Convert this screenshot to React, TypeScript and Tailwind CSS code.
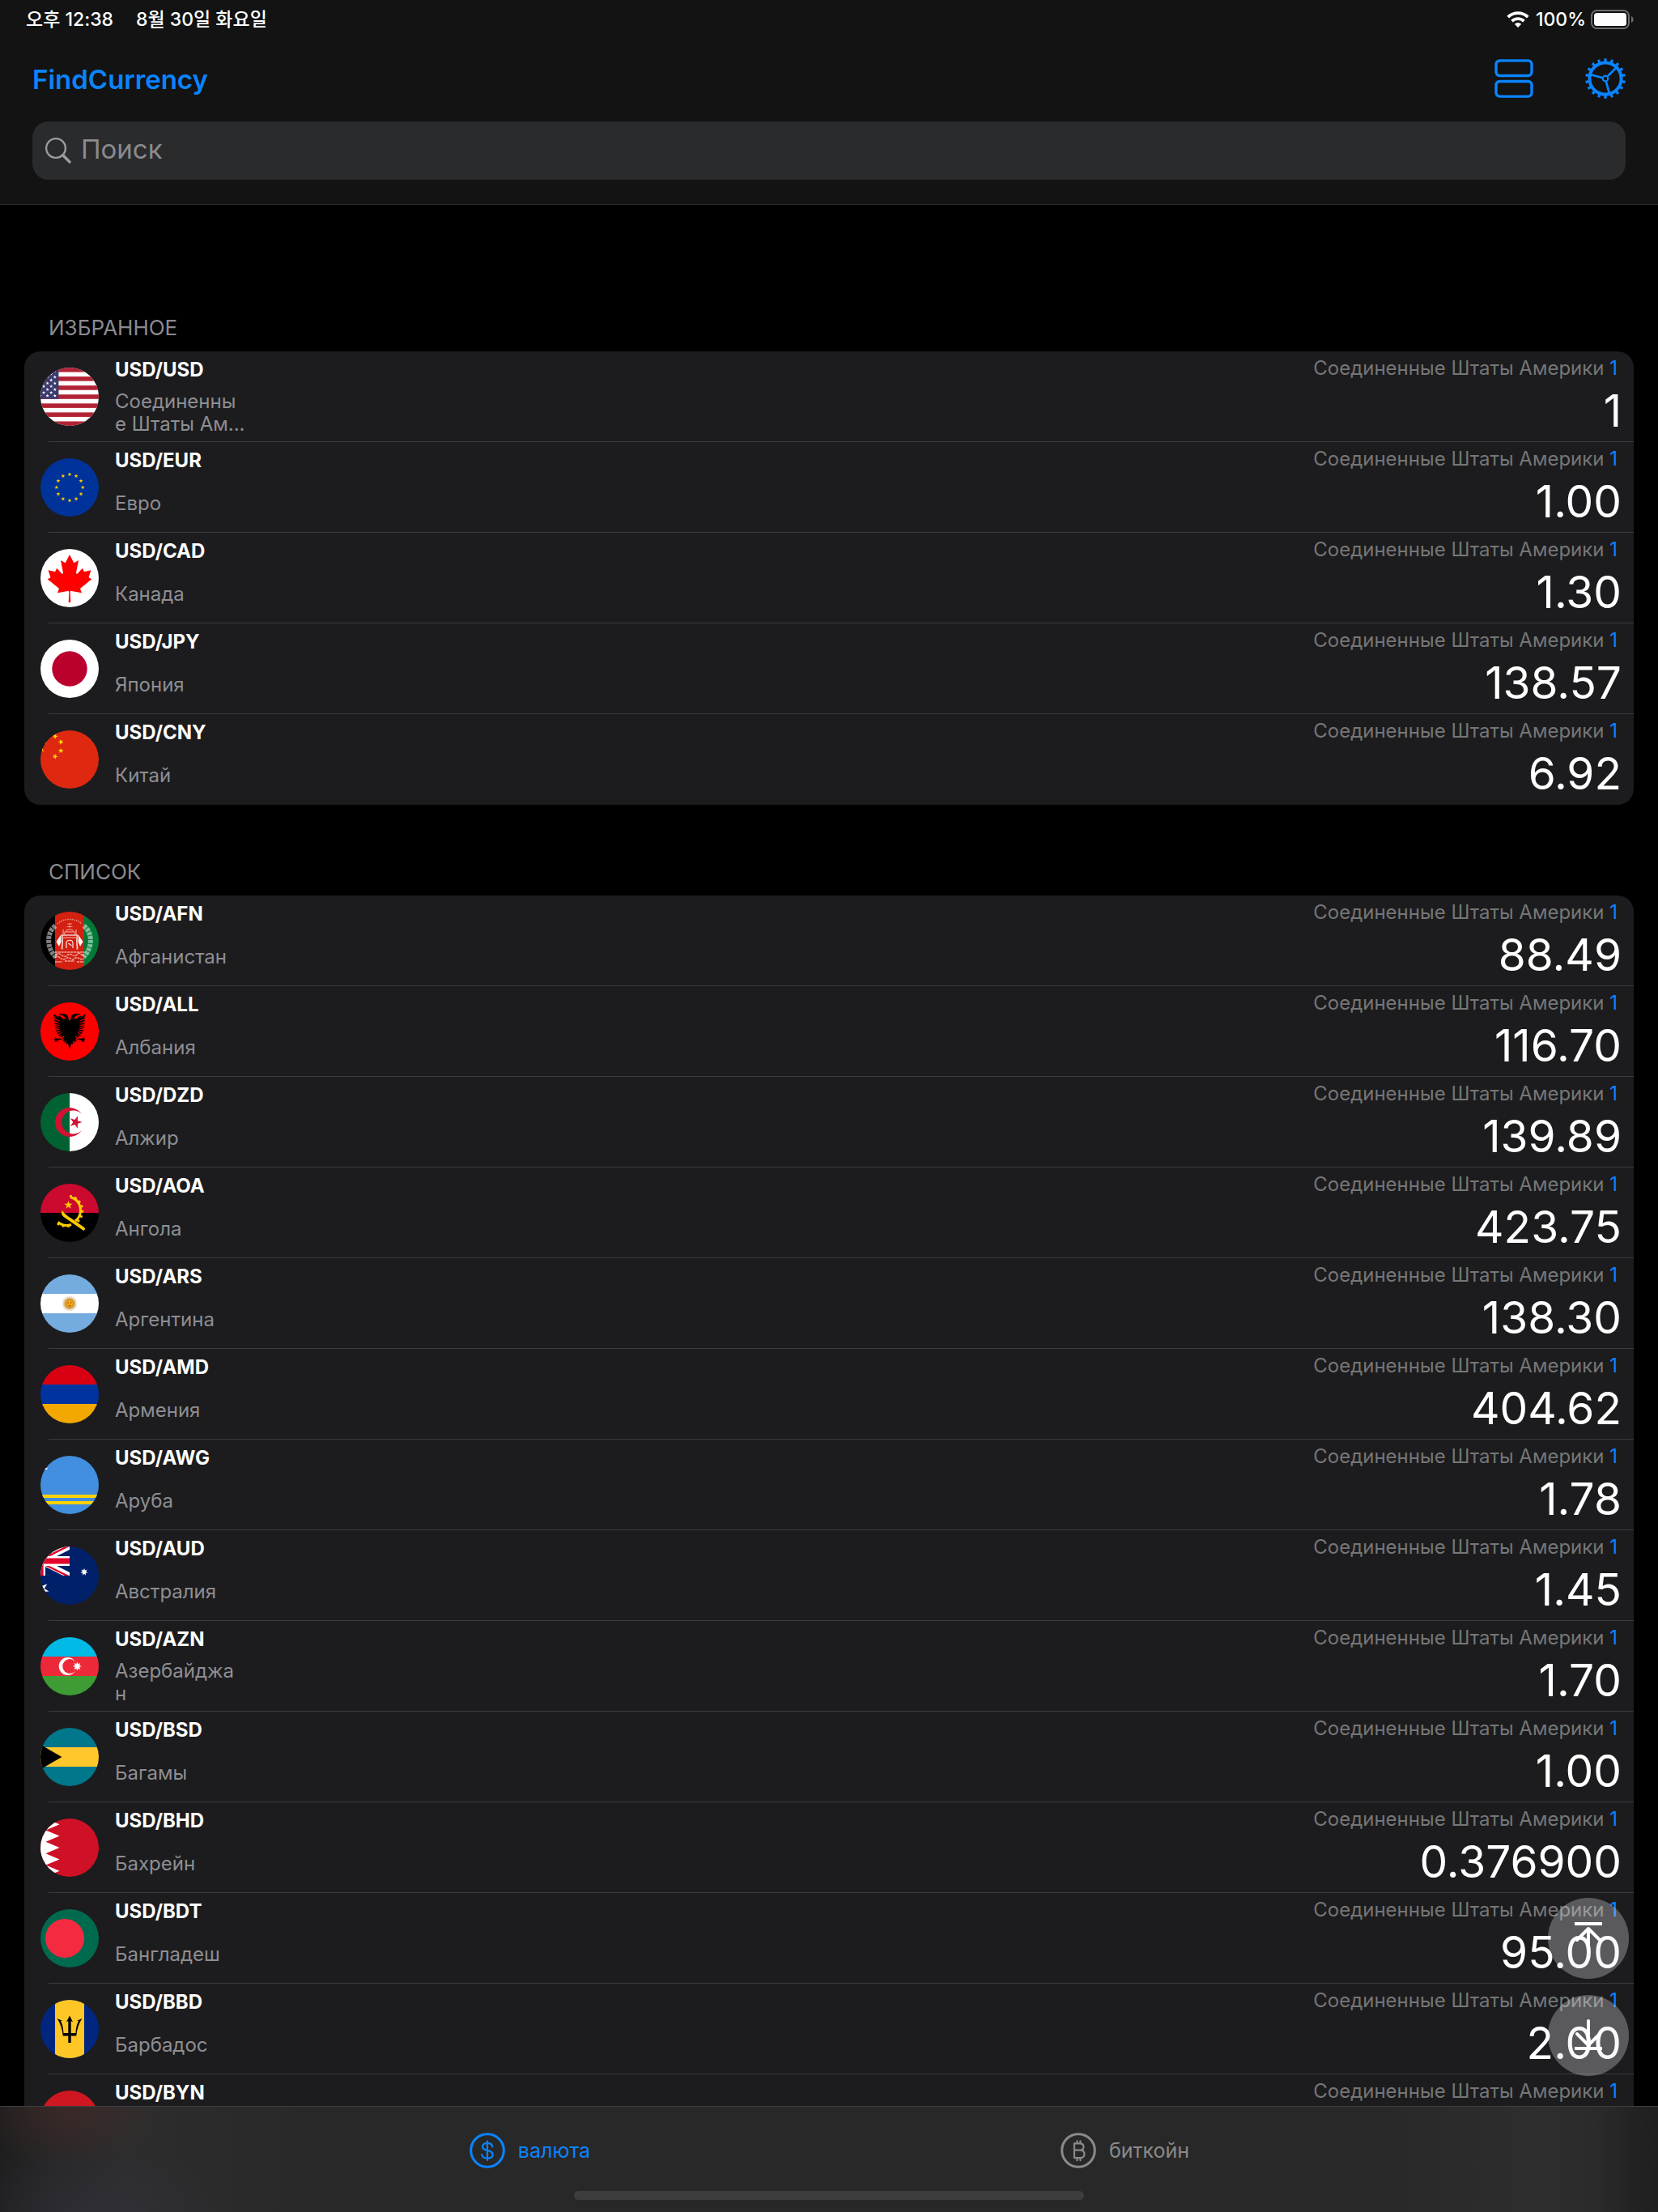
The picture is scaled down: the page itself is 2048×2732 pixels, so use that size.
import React from "react";

function star(cx: number, cy: number, outer: number, inner: number, points = 5, rotate = 0) {
  const out: string[] = [];
  for (let i = 0; i < points * 2; i++) {
    const r = i % 2 === 0 ? outer : inner;
    const a = ((i * 180) / points - 90 + rotate) * (Math.PI / 180);
    out.push(`${(cx + r * Math.cos(a)).toFixed(2)},${(cy + r * Math.sin(a)).toFixed(2)}`);
  }
  return out.join(" ");
}

function Tricolor({ a, b, c }: { a: string; b: string; c: string }) {
  return (
    <>
      <rect width="72" height="24" fill={a} />
      <rect y="24" width="72" height="24" fill={b} />
      <rect y="48" width="72" height="24" fill={c} />
    </>
  );
}

function UsFlag() {
  const stars: React.ReactNode[] = [];
  for (let col = 0; col < 5; col++) {
    for (let row = 0; row < 5; row++) {
      const x = 17.8 - col * 4.6;
      const y = (col % 2 === 0 ? 4 : 7.8) + row * 7.7;
      if (y < 37) stars.push(<polygon key={`${col}-${row}`} points={star(x, y, 2.2, 0.9)} fill="#fff" />);
    }
  }
  return (
    <>
      <rect width="72" height="72" fill="#fff" />
      {[0, 1, 2, 3, 4, 5, 6].map((i) => (
        <rect key={i} y={(i * 2 * 72) / 13} width="72" height={72 / 13} fill="#b22234" />
      ))}
      <rect width="22.4" height={(72 * 7) / 13} fill="#3c3b6e" />
      {stars}
    </>
  );
}

function EuFlag() {
  return (
    <>
      <rect width="72" height="72" fill="#003399" />
      {Array.from({ length: 12 }, (_, i) => {
        const a = (i * Math.PI) / 6;
        return <polygon key={i} points={star(36 + 16.2 * Math.sin(a), 36 - 16.2 * Math.cos(a), 2.6, 1.1)} fill="#ffcc00" />;
      })}
    </>
  );
}

function CaFlag() {
  return (
    <>
      <rect width="72" height="72" fill="#fff" />
      <path
        transform="translate(-34.56 1) scale(.0147)"
        fill="#f00"
        d="M4890 4430l-45-863a95 95 0 0 1 111-98l859 151-116-320a65 65 0 0 1 20-73l941-762-212-99a65 65 0 0 1-34-79l186-572-542 115a65 65 0 0 1-73-38l-105-247-423 454a65 65 0 0 1-111-57l204-1052-327 189a65 65 0 0 1-91-27l-332-652-332 652a65 65 0 0 1-91 27l-327-189 204 1052a65 65 0 0 1-111 57l-423-454-105 247a65 65 0 0 1-73 38l-542-115 186 572a65 65 0 0 1-34 79l-212 99 941 762a65 65 0 0 1 20 73l-116 320 859-151a95 95 0 0 1 111 98l-45 863z"
      />
    </>
  );
}

function CnFlag() {
  return (
    <>
      <rect width="72" height="72" fill="#de2910" />
      <polygon points={star(-2.3, 18, 10.8, 4.1)} fill="#ffde00" />
      <polygon points={star(18, 7.3, 3.5, 1.4, 5, 23)} fill="#ffde00" />
      <polygon points={star(25.2, 14.4, 3.5, 1.4, 5, 46)} fill="#ffde00" />
      <polygon points={star(25.2, 25.2, 3.5, 1.4, 5, 0)} fill="#ffde00" />
      <polygon points={star(18, 32.3, 3.5, 1.4, 5, 21)} fill="#ffde00" />
    </>
  );
}

function AfFlag() {
  return (
    <>
      <rect width="18" height="72" fill="#000" />
      <rect x="18" width="36" height="72" fill="#d32011" />
      <rect x="54" width="18" height="72" fill="#007a36" />
      <g fill="none" stroke="#fff">
        <g opacity=".5">
          <path d="M18.500 17.500C8 25 6.500 44 19 56" strokeWidth="6" strokeDasharray="4 1" />
          <path d="M53.500 17.500C64 25 65.500 44 53 56" strokeWidth="6" strokeDasharray="4 1" />
        </g>
        <path d="M21 15C29 7.500 43 7.500 51 15" strokeWidth="1.500" strokeDasharray="1.500 1.200" opacity=".5" />
        <path d="M33 15h6M36 14v6M32.500 18.500h7" strokeWidth=".8" opacity=".6" />
        <path d="M27 47V29h18v18M29.500 28c0-8 13-8 13 0M31 25h10M28 28v-6M44 28v-6M25 29h22M28 32h16" strokeWidth="1" opacity=".7" />
        <path d="M32 45v-6c0-5 8-5 8 0v6M34.500 39l4 3" strokeWidth="1.200" opacity=".9" />
        <path d="M26 29c2 5 1.500 10 0 17M46 29c-2 5-1.500 10 0 17" strokeWidth="1.200" opacity=".8" />
        <path d="M18 50h36M19 53c5-5 9 6 14 1s8 4 12-1 6 3 8 0M18 57c5-5 8 5 13 1s8 4 11 0 8 3 12 0M18 62h9M30 61h12M45 62h9" strokeWidth="1.500" opacity=".6" strokeDasharray="3 .8" />
      </g>
      <path d="M25 29l-5.500 8 3.500 6 2.500-6zM47 29l5.500 8-3.500 6-2.500-6z" fill="#fff" />
    </>
  );
}

function AlFlag() {
  const half =
    "M36 23C34.500 21 34 19.500 34.500 18.500 33.500 15 30 13.500 27.500 14.200L24.500 14l-2 1.300 3 .2 2.500 1.300c2 1 2.800 2 2 3.400-1 1-3 0-4-1.500-1.200-1.500-3.500-2-4.500-2l1 2.200-4.500-3.700-1.500-1 .3 2.800 3 2.200-3.200-1 .3 2.300 3.700 2-3.700-.5.300 2.300 4 1.600-4 0 .4 2.300 4.300 1-4.200.6.600 2.200 4.200.4-4 1.200.8 2.200 4-.3-3.600 1.800 1.200 1.800 3.800-1-3 2.300 1.500 1.400 3.200-1.700-2 2.700 2 .8 2.500-2.600c.5 1.200-.500 2.600-2 3.800L20 44.500l-2.500-1.500.6 2-2.100.6 2.300 1-1.200 2.300 2.500-1.300.8 2 1-2.700 4.600-1.500 2.800-.4-1.600 3.600 2.300-1 .2 3 1.800-1.500 1 3.300 1.500-1.300L36 58z";
  const feathers =
    "M16 19.300l7.500 4M16 23.200l7.500 2.800M16 27l7.500 1.500M16 30.800l7.500 0M16.500 34.500l7.500-1.500M18 38.300l7-3.300M21 41l5.500-4.500M29 52l3-4M31 55l2.500-4";
  return (
    <>
      <rect width="72" height="72" fill="#f00" />
      {["", "translate(72 0) scale(-1 1)"].map((t) => (
        <g key={t} transform={t || undefined}>
          <path d={half} fill="#000" />
          <path d={feathers} stroke="#f00" strokeWidth="1" />
        </g>
      ))}
    </>
  );
}

function DzFlag() {
  return (
    <>
      <rect width="36" height="72" fill="#006233" />
      <rect x="36" width="36" height="72" fill="#fff" />
      <path d="M51 26a18 18 0 1 0 0 20a14.400 14.400 0 1 1 0-20z" fill="#d21034" />
      <polygon points={star(43.4, 36, 8.2, 3.1, 5, 90)} fill="#d21034" />
    </>
  );
}

function AoFlag() {
  return (
    <>
      <rect width="72" height="36" fill="#cc092f" />
      <rect y="36" width="72" height="36" fill="#000" />
      <g fill="none" stroke="#ffcb00">
        <path d="M37 16.500A16.800 16.800 0 0 1 43 46M21.500 47.500A18 18 0 0 0 38 50.500" strokeWidth="3" />
        <path d="M36 15.200A18.300 18.300 0 0 1 45 47.500M21 49A19 19 0 0 0 36 52" strokeWidth="3" strokeDasharray="2.800 3.600" />
      </g>
      <path d="M27 33c-1.700 3-1.300 5.500 2 8.200L53.300 58l1.900-2-1-2L38.500 43C33 39.800 29.500 37 27 33z" fill="#ffcb00" />
      <polygon points={star(34.5, 26.3, 5.4, 2.1)} fill="#ffcb00" />
    </>
  );
}

function ArFlag() {
  return (
    <>
      <Tricolor a="#74acdf" b="#fff" c="#74acdf" />
      <polygon points={star(36, 36, 10, 6.5, 24)} fill="#dcb57c" />
      <circle cx="36" cy="36" r="5" fill="#f0a810" stroke="#a8690f" strokeWidth=".7" />
      <path d="M33.500 35h1.500M37 35h1.500M34.500 38.500q1.500 1 3 0" stroke="#85340a" strokeWidth=".8" fill="none" />
    </>
  );
}

function AwFlag() {
  return (
    <>
      <rect width="72" height="72" fill="#418fde" />
      <path d="M2 14.500l6.500 1.500-6.500 1.800z" fill="#d21034" stroke="#fff" strokeWidth="1" />
      <rect y="48" width="72" height="4" fill="#ffd100" />
      <rect y="56" width="72" height="4" fill="#ffd100" />
    </>
  );
}

function AuFlag() {
  return (
    <>
      <rect width="72" height="72" fill="#00206a" />
      <clipPath id="canton">
        <rect width="36" height="36" />
      </clipPath>
      <g clipPath="url(#canton)">
        <path d="M-36 0L36 36M-36 36L36 0" stroke="#fff" strokeWidth="7.200" />
        <path d="M0 19.700L36 37.700M0 16.600L36 -1.400" stroke="#e4002b" strokeWidth="2.400" />
        <path d="M0 0V36M0 18H36" stroke="#fff" strokeWidth="12" />
        <path d="M0 0V36M0 18H36" stroke="#e4002b" strokeWidth="7.200" />
      </g>
      <polygon points={star(0, 53, 10.8, 4.8, 7)} fill="#fff" />
      <polygon points={star(54, 31.5, 4.8, 2.2, 7)} fill="#fff" />
    </>
  );
}

function AzFlag() {
  return (
    <>
      <Tricolor a="#00b9e4" b="#ed2939" c="#3f9c35" />
      <circle cx="33.600" cy="36" r="10.900" fill="#fff" />
      <circle cx="36.200" cy="36" r="9" fill="#ed2939" />
      <polygon points={star(45.4, 36, 5.5, 2.9, 8)} fill="#fff" />
    </>
  );
}

function BsFlag() {
  return (
    <>
      <Tricolor a="#00778b" b="#ffc72c" c="#00778b" />
      <path d="M-36 0L26.400 36L-36 72z" fill="#000" />
    </>
  );
}

function BhFlag() {
  return (
    <>
      <rect width="72" height="72" fill="#ce1126" />
      <path d="M0 0H6.500L23.500 7.200 6.500 14.400 23.500 21.600 6.500 28.800 23.500 36 6.500 43.200 23.500 50.400 6.500 57.600 23.500 64.800 6.500 72H0z" fill="#fff" />
    </>
  );
}

function BdFlag() {
  return (
    <>
      <rect width="72" height="72" fill="#006a4e" />
      <circle cx="30" cy="36" r="24" fill="#f42a41" />
    </>
  );
}

function BbFlag() {
  const half = "M36 19.500l-4 7.800 2.300-1V41h-5.800c-.2-6-1.500-12-3.700-14.500l2-.7L20.500 23c4 5.500 6.500 13 7.200 21.500h6.600V53H36z";
  return (
    <>
      <rect width="72" height="72" fill="#00267f" />
      <rect x="18" width="36" height="72" fill="#ffc726" />
      <path d={half} fill="#000" />
      <path d={half} fill="#000" transform="translate(72 0) scale(-1 1)" />
    </>
  );
}

type Rate = { code: string; name: string; value: string; flag: React.ReactNode };

const favourites: Rate[] = [
  { code: "USD", name: "Соединенны\nе Штаты Ам...", value: "1", flag: <UsFlag /> },
  { code: "EUR", name: "Евро", value: "1.00", flag: <EuFlag /> },
  { code: "CAD", name: "Канада", value: "1.30", flag: <CaFlag /> },
  {
    code: "JPY",
    name: "Япония",
    value: "138.57",
    flag: (
      <>
        <rect width="72" height="72" fill="#fff" />
        <circle cx="36" cy="36" r="21.700" fill="#bc002d" />
      </>
    ),
  },
  { code: "CNY", name: "Китай", value: "6.92", flag: <CnFlag /> },
];

const list: Rate[] = [
  { code: "AFN", name: "Афганистан", value: "88.49", flag: <AfFlag /> },
  { code: "ALL", name: "Албания", value: "116.70", flag: <AlFlag /> },
  { code: "DZD", name: "Алжир", value: "139.89", flag: <DzFlag /> },
  { code: "AOA", name: "Ангола", value: "423.75", flag: <AoFlag /> },
  { code: "ARS", name: "Аргентина", value: "138.30", flag: <ArFlag /> },
  { code: "AMD", name: "Армения", value: "404.62", flag: <Tricolor a="#d90012" b="#0033a0" c="#f2a800" /> },
  { code: "AWG", name: "Аруба", value: "1.78", flag: <AwFlag /> },
  { code: "AUD", name: "Австралия", value: "1.45", flag: <AuFlag /> },
  { code: "AZN", name: "Азербайджа\nн", value: "1.70", flag: <AzFlag /> },
  { code: "BSD", name: "Багамы", value: "1.00", flag: <BsFlag /> },
  { code: "BHD", name: "Бахрейн", value: "0.376900", flag: <BhFlag /> },
  { code: "BDT", name: "Бангладеш", value: "95.00", flag: <BdFlag /> },
  { code: "BBD", name: "Барбадос", value: "2.00", flag: <BbFlag /> },
  {
    code: "BYN",
    name: "Беларусь",
    value: "2.53",
    flag: (
      <>
        <rect width="72" height="48" fill="#ce1720" />
        <rect y="48" width="72" height="24" fill="#007c30" />
      </>
    ),
  },
];

function RateRow({ rate, last }: { rate: Rate; last: boolean }) {
  return (
    <li className="flex h-28 flex-col">
      <div className="flex min-h-0 flex-1 pl-5 pr-4">
        <svg viewBox="0 0 72 72" className="mt-5 size-[72px] shrink-0 rounded-full" aria-hidden="true">
          {rate.flag}
        </svg>
        <div className="ml-5 flex w-[168px] shrink-0 flex-col pt-[9px]">
          <h3 className="text-[24px] leading-7 font-bold text-white">USD/{rate.code}</h3>
          <div className="mt-[11px] flex h-14 items-center">
            <p className="text-[24px] leading-7 whitespace-pre-line text-[#8e8e93]">{rate.name}</p>
          </div>
        </div>
        <div className="flex flex-1 flex-col items-end pt-[7px]">
          <p className="mr-1 text-[24px] leading-7 text-[#767676]">
            Соединенные Штаты Америки <span className="text-[#0a84ff]">1</span>
          </p>
          <p className="-mr-px mt-[7px] text-[55px] leading-[62px] text-white">{rate.value}</p>
        </div>
      </div>
      {!last && <div className="ml-[30px] h-px shrink-0 bg-[#3b3b3d]" />}
    </li>
  );
}

function Section({ title, rates }: { title: string; rates: Rate[] }) {
  return (
    <section className="px-[30px] pt-[67px]">
      <h2 className="px-[30px] pb-[13px] text-[26px] leading-8 text-[#8a8a8e]">{title}</h2>
      <ul className="overflow-hidden rounded-[20px] bg-[#1c1c1e]">
        {rates.map((r, i) => (
          <RateRow key={r.code} rate={r} last={i === rates.length - 1} />
        ))}
      </ul>
    </section>
  );
}

function WifiIcon() {
  return (
    <svg viewBox="0 0 28 20" className="h-5 w-7" aria-hidden="true">
      <path d="M14 20l-4.200-4.300a6 6 0 0 1 8.400 0z" fill="#fff" />
      <g fill="none" stroke="#fff" strokeWidth="3.800">
        <path d="M6.600 12.200a10.600 10.600 0 0 1 14.800 0" />
        <path d="M1.700 7.100a17.600 17.600 0 0 1 24.600 0" />
      </g>
    </svg>
  );
}

function BatteryIcon() {
  return (
    <svg viewBox="0 0 54 24" className="h-6 w-[54px]" aria-hidden="true">
      <rect x="1" y="1" width="46" height="22" rx="6.500" fill="none" stroke="#6e6e6e" strokeWidth="2" />
      <rect x="4" y="4" width="40" height="16" rx="3.500" fill="#fff" />
      <path d="M50 8c3.500 1.300 3.500 6.700 0 8z" fill="#6e6e6e" />
    </svg>
  );
}

function StackIcon() {
  return (
    <svg viewBox="0 0 48 48" className="size-12" fill="none" stroke="#0a84ff" strokeWidth="3.400" aria-hidden="true">
      <rect x="2" y="1.900" width="44" height="18.600" rx="4.500" />
      <rect x="2" y="27.500" width="44" height="18.600" rx="4.500" />
    </svg>
  );
}

function GearIcon() {
  return (
    <svg viewBox="0 0 50 50" className="size-[50px]" fill="none" stroke="#0a84ff" aria-hidden="true">
      <circle cx="25" cy="25" r="19.600" strokeWidth="4" />
      {Array.from({ length: 18 }, (_, i) => (
        <path key={i} d="M25 4.800V.2" strokeWidth="3.200" transform={`rotate(${i * 20} 25 25)`} />
      ))}
      <circle cx="25" cy="25" r="3.300" strokeWidth="2.200" />
      <path d="M28 22L39 11M21.200 24L6 20M26 29L30 44" strokeWidth="2.800" />
    </svg>
  );
}

function DollarCircle() {
  return (
    <svg viewBox="0 0 44 44" className="size-11" fill="none" stroke="currentColor" strokeLinecap="round" aria-hidden="true">
      <circle cx="22" cy="22" r="20.300" strokeWidth="3" />
      <path d="M28.300 17.300c-.4-2.700-2.900-4.500-6.300-4.500-3.500 0-6 1.800-6 4.500 0 2.500 1.900 3.700 6 4.600 4.700 1 6.700 2.400 6.700 5.100 0 2.900-2.700 4.700-6.700 4.700-3.900 0-6.500-1.900-6.800-4.700M22 10.500v23.500" strokeWidth="2.200" />
    </svg>
  );
}

function BitcoinCircle() {
  return (
    <svg viewBox="0 0 44 44" className="size-11" fill="none" stroke="currentColor" strokeLinejoin="round" strokeLinecap="round" aria-hidden="true">
      <circle cx="22" cy="22" r="20.300" strokeWidth="3" />
      <path d="M17 13.300h6.500c3.100 0 5 1.600 5 4.200s-1.900 4.200-5 4.200H17zM17 21.700h7c3.400 0 5.400 1.800 5.400 4.700s-2 4.700-5.400 4.700h-7zM20.500 13v-2.700M24.500 13v-2.700M20.500 31.500v2.700M24.500 31.500v2.700" strokeWidth="2.200" />
    </svg>
  );
}

function ScrollTopIcon() {
  return (
    <svg viewBox="0 0 100 100" className="size-full" fill="none" stroke="#fff" strokeWidth="4" aria-hidden="true">
      <path d="M33 32H67" />
      <path d="M50 67V38M36 52L50 38L64 52" strokeLinecap="round" strokeLinejoin="round" />
    </svg>
  );
}

function ScrollBottomIcon() {
  return (
    <svg viewBox="0 0 100 100" className="size-full" fill="none" stroke="#fff" strokeWidth="4" aria-hidden="true">
      <path d="M33 66H67" />
      <path d="M50 32V62M36 48L50 62L64 48" strokeLinecap="round" strokeLinejoin="round" />
    </svg>
  );
}

export default function App() {
  return (
    <div className="flex h-screen flex-col overflow-hidden bg-black font-['Inter','Noto_Sans_CJK_KR',sans-serif]">
      <header className="shrink-0 border-b border-[#2c2c2d] bg-[#121312] px-10 pb-[30px]">
        <div className="-mx-2 flex h-12 items-center justify-between text-[23px] leading-7 font-medium text-white">
          <div className="flex gap-7">
            <span>오후 12:38</span>
            <span>8월 30일 화요일</span>
          </div>
          <div className="-mr-[3px] flex items-center gap-2">
            <WifiIcon />
            <span className="-mr-0.5">100%</span>
            <BatteryIcon />
          </div>
        </div>
        <div className="flex h-[98px] items-center justify-between">
          <h1 className="pt-0.5 text-[33px] leading-10 font-semibold text-[#0a84ff]">FindCurrency</h1>
          <div className="flex items-center gap-16">
            <button type="button" aria-label="Вид списка">
              <StackIcon />
            </button>
            <button type="button" aria-label="Настройки">
              <GearIcon />
            </button>
          </div>
        </div>
        <label className="mt-1 flex h-[72px] items-center gap-3 rounded-[20px] bg-[#2a2b2d] px-4">
          <svg viewBox="0 0 32 32" className="size-8 shrink-0" fill="none" stroke="#9b9ba2" aria-hidden="true">
            <circle cx="13" cy="13" r="11.900" strokeWidth="2.400" />
            <path d="M21.800 21.800L30 30" strokeWidth="3.400" strokeLinecap="round" />
          </svg>
          <input
            type="search"
            aria-label="Поиск"
            placeholder="Поиск"
            className="min-w-0 flex-1 bg-transparent pb-1 text-[33px] leading-10 text-white outline-none placeholder:text-[#8a8a8c]"
          />
        </label>
      </header>

      <main className="min-h-0 flex-1 overflow-y-auto pt-[69px] [scrollbar-width:none]">
        <Section title="ИЗБРАННОЕ" rates={favourites} />
        <Section title="СПИСОК" rates={list} />
      </main>

      <div className="fixed right-9 bottom-[168px] flex flex-col gap-5">
        <button type="button" aria-label="В начало" className="size-[100px] rounded-full bg-[rgba(235,235,245,0.3)]">
          <ScrollTopIcon />
        </button>
        <button type="button" aria-label="В конец" className="size-[100px] rounded-full bg-[rgba(235,235,245,0.3)]">
          <ScrollBottomIcon />
        </button>
      </div>

      <footer className="flex h-[131px] shrink-0 flex-col items-center justify-between border-t border-[#3f3f41] bg-[#282828] bg-[radial-gradient(ellipse_120px_70px_at_85px_5px,rgba(85,42,40,0.4),rgba(85,45,42,0.15)_60%,transparent),radial-gradient(ellipse_180px_90px_at_110px_135px,rgba(52,50,66,0.5),transparent),linear-gradient(90deg,#1e1e1e_0px,#272727_70px,#2d2d2d_160px,#282828_400px,#282828_1700px,#2e2e2e_1900px,#2b2b2b_1970px,#1e1e1e_2048px)] pb-[15px]">
        <nav className="grid w-full max-w-[1474px] grid-cols-2 pt-8 pr-1">
          <a href="#currency" aria-current="page" className="flex items-center justify-center gap-4 text-[25px] leading-8 text-[#0a84ff]">
            <DollarCircle />
            валюта
          </a>
          <a href="#bitcoin" className="flex items-center justify-center gap-4 text-[25px] leading-8 text-[#8a8a8a]">
            <BitcoinCircle />
            биткойн
          </a>
        </nav>
        <div className="h-[11px] w-[630px] rounded-full bg-[#3d3d3d]" />
      </footer>
    </div>
  );
}
